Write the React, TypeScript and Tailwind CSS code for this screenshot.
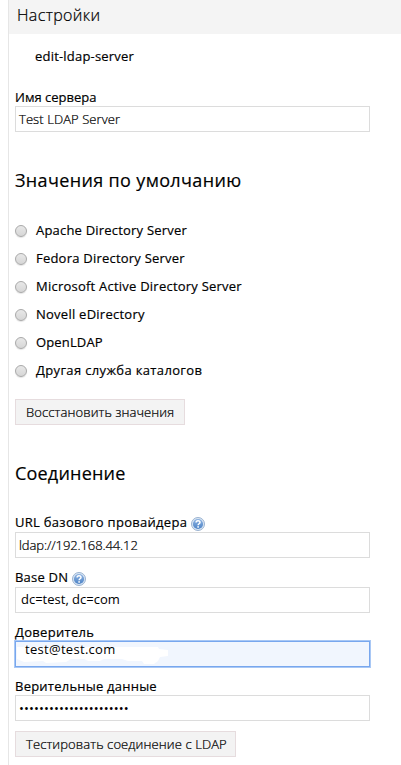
import React from 'react';

const servers: { name: string; spacing: string }[] = [
  { name: 'Apache Directory Server', spacing: 'tracking-[0.2px]' },
  { name: 'Fedora Directory Server', spacing: 'tracking-[0.22px]' },
  { name: 'Microsoft Active Directory Server', spacing: 'tracking-[0.23px]' },
  { name: 'Novell eDirectory', spacing: 'tracking-[0.25px]' },
  { name: 'OpenLDAP', spacing: 'tracking-[0.15px]' },
  { name: 'Другая служба каталогов', spacing: 'tracking-[0.35px]' },
];

const bolder = '[-webkit-text-stroke:0.18px_#000]';
const lighter = 'font-light [-webkit-text-stroke:0.22px_#000]';

function HelpIcon() {
  return (
    <svg className="mt-[2px] h-[14px] w-[14px] shrink-0" viewBox="0 0 14 14" aria-hidden="true">
      <defs>
        <linearGradient id="help-fill" x1="0" y1="0" x2="0" y2="1">
          <stop offset="0" stopColor="#8fb4e2" />
          <stop offset="1" stopColor="#4d83c6" />
        </linearGradient>
      </defs>
      <circle cx="7" cy="7" r="6.5" fill="#dce8f5" stroke="#8ea9cb" strokeWidth="0.9" />
      <circle cx="7" cy="7" r="5.1" fill="url(#help-fill)" />
      <path d="M5.1 5.6C5.1 3.2 9 3.3 9 5.4C9 6.8 7.1 6.7 7.1 8.3" fill="none" stroke="#fff" strokeWidth="1.5" />
      <rect x="6.3" y="9.2" width="1.6" height="1.5" fill="#fff" />
    </svg>
  );
}

type FieldProps = {
  label: string;
  labelClass?: string;
  help?: boolean;
  boxClass?: string;
  children: React.ReactNode;
};

function Field({ label, labelClass = '', help, boxClass = 'border border-[#dcdcdc] bg-white', children }: FieldProps) {
  return (
    <div className="w-[355px]">
      <div className={`flex h-[18px] items-center gap-[4px] ${bolder}`}>
        <span className={labelClass}>{label}</span>
        {help && <HelpIcon />}
      </div>
      <div className={`flex h-[26px] items-center ${boxClass}`}>{children}</div>
    </div>
  );
}

function Button({ className, children }: { className: string; children: React.ReactNode }) {
  return (
    <button className={`flex h-[26px] items-center border border-[#e6dcde] bg-[#f3f3f3] pl-[10px] text-left tracking-[0.1px] ${lighter} ${className}`}>
      {children}
    </button>
  );
}

export default function App() {
  return (
    <div className="h-[765px] w-[401px] overflow-hidden bg-white pl-[8px] font-['Open_Sans','Noto_Sans',sans-serif] text-[13px] leading-[18px] whitespace-nowrap text-black">
      <div className="h-full border-l border-[#e6e6e6]">
        <header className={`flex h-[34px] items-center bg-[#f4f4f4] pb-[4px] pl-[8px] text-[16px] tracking-[0.35px] ${lighter}`}>
          <span>Настройки</span>
        </header>
        <main className="pl-[6px]">
          <p className={`pt-[13px] pl-[20px] tracking-[0.2px] ${bolder}`}>edit-ldap-server</p>

          <div className="mt-[23px]">
            <Field label="Имя сервера">
              <span className={`pl-[3px] tracking-[0.08px] ${lighter}`}>Test LDAP Server</span>
            </Field>
          </div>

          <h2 className={`mt-[36px] h-[24px] text-[18px] leading-[24px] tracking-[0.35px] ${bolder}`}>Значения по умолчанию</h2>

          <div className="mt-[24px] flex flex-col">
            {servers.map((s) => (
              <label key={s.name} className={`flex h-[28px] items-center gap-[9px] ${bolder}`}>
                <span className="mt-[2px] h-[12px] w-[12px] rounded-full border border-[#a9a9a9] bg-linear-to-b from-[#e8e8e8] to-[#d6d6d6] shadow-[0_1px_1px_#e4e4e4]" />
                <span className={s.spacing}>{s.name}</span>
              </label>
            ))}
          </div>

          <Button className="mt-[15px] w-[170px]">Восстановить значения</Button>

          <h2 className={`mt-[36px] h-[24px] text-[18px] leading-[24px] tracking-[0.2px] ${bolder}`}>Соединение</h2>

          <div className="mt-[29px] flex flex-col gap-[10px]">
            <Field label="URL базового провайдера" labelClass="pb-[2px] tracking-[0.29px]" help>
              <span className={`pl-[3px] tracking-[-0.1px] ${lighter}`}>ldap://192.168.44.12</span>
            </Field>
            <div className="pt-px">
              <Field label="Base DN" labelClass="pb-[2px] tracking-[0.2px]" help>
                <span className="pb-[2px] pl-[5px]">dc=test, dc=com</span>
              </Field>
            </div>
            <Field
              label="Доверитель"
              labelClass="tracking-[0.3px]"
              boxClass="border border-[#78a7ee] bg-[#f1f6fe] shadow-[0_0_0_1px_#a9c8f5]"
            >
              <span className="relative flex h-full w-[153px] items-start pl-[9px] leading-[14px] tracking-[0.3px]">
                <svg className="absolute top-[5px] left-0 h-[18px] w-[153px]" viewBox="0 0 153 18" aria-hidden="true">
                  <path d="M1 0H142L143 2L152 3V9L144 10L142 14L138 17H128L126 14H112L106 12H88L84 14H72L68 12H55L50 15L30 16L27 14L8 15L1 12Z" fill="#fff" />
                </svg>
                <span className="relative">test@test.com</span>
              </span>
            </Field>
            <Field label="Верительные данные" labelClass="tracking-[0.23px]">
              <span className="pl-[3px] text-[13px] tracking-[0.1px]">••••••••••••••••••••••</span>
            </Field>
          </div>

          <Button className="mt-[10px] w-[221px]">Тестировать соединение с LDAP</Button>
        </main>
      </div>
    </div>
  );
}
